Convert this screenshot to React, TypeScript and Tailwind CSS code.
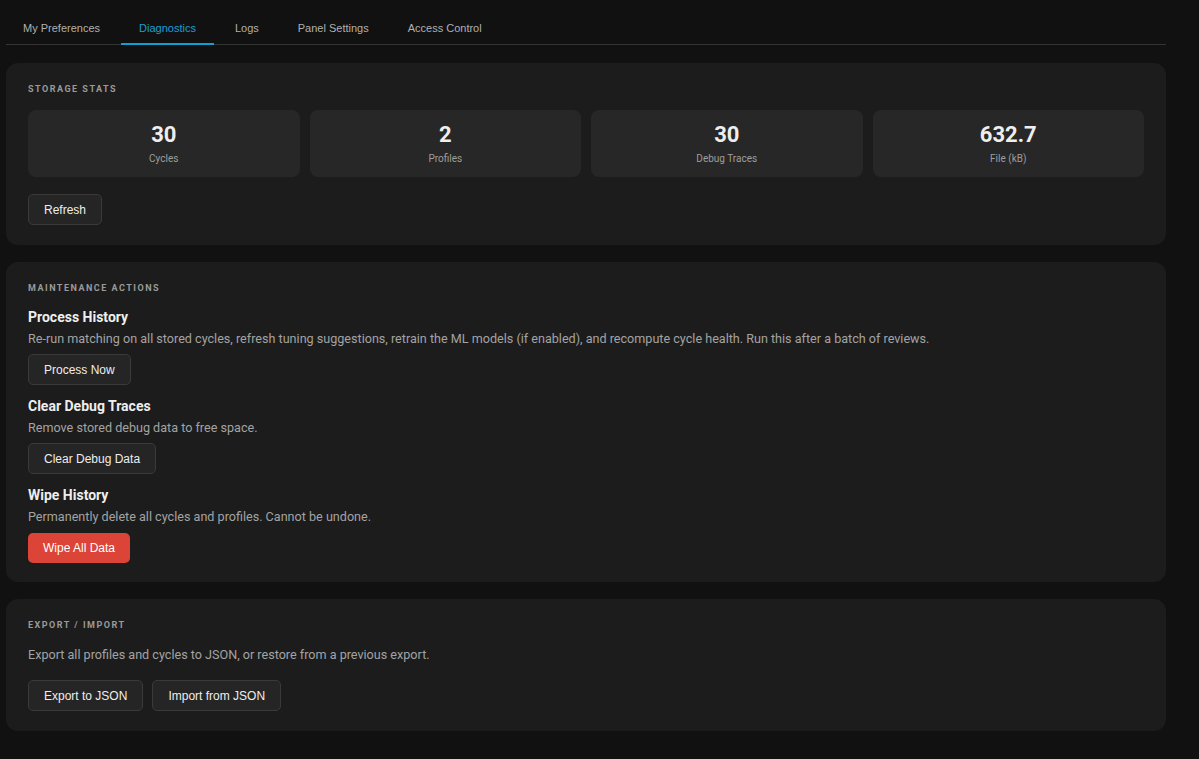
import React from "react";

const tabs = ["My Preferences", "Diagnostics", "Logs", "Panel Settings", "Access Control"];

function SectionTitle({ children }: { children: React.ReactNode }) {
  return (
    <div className="text-[9px] leading-[12px] font-bold tracking-[1.5px] uppercase text-[#9a9a9a] font-['Roboto',sans-serif]">
      {children}
    </div>
  );
}

function Btn({ children, danger }: { children: React.ReactNode; danger?: boolean }) {
  return (
    <button
      className={
        danger
          ? "h-[30px] px-[15px] rounded-[5px] bg-[#db4437] text-white text-[12px] font-['Liberation_Sans',Arial,sans-serif]"
          : "h-[31px] px-[15px] rounded-[5px] bg-[#252525] border border-[#3a3a3a] text-[#eeeeee] text-[12px] font-['Liberation_Sans',Arial,sans-serif]"
      }
    >
      {children}
    </button>
  );
}

function Stat({ value, label }: { value: string; label: string }) {
  return (
    <div className="h-[67px] rounded-lg bg-[#272727] flex flex-col items-center pt-[12px]">
      <div className="text-[22px] leading-[26px] font-bold text-[#eeeeee]">{value}</div>
      <div className="mt-[4px] text-[10px] leading-[14px] text-[#9e9e9e]">{label}</div>
    </div>
  );
}

function Action({
  title,
  desc,
  button,
  danger,
}: {
  title: string;
  desc: string;
  button: string;
  danger?: boolean;
}) {
  return (
    <div className="flex flex-col items-start">
      <div className="text-[14px] leading-[18px] font-bold text-[#eeeeee]">{title}</div>
      <div className="mt-[4px] text-[12.6px] leading-[18px] text-[#a3a3a3]">{desc}</div>
      <div className={danger ? "mt-[7px]" : "mt-[6px]"}>
        <Btn danger={danger}>{button}</Btn>
      </div>
    </div>
  );
}

export default function App() {
  return (
    <div className="min-h-[759px] bg-[#111111] font-['Roboto',sans-serif] pl-[6px] pb-6">
      <div className="w-[1160px]">
        <div className="border-b border-[#333333] pt-[15px]">
          <div className="flex gap-[3px] -ml-px">
            {tabs.map((t) => {
              const active = t === "Diagnostics";
              return (
                <div
                  key={t}
                  className={
                    active
                      ? "px-[18px] pb-[8px] pt-[7px] text-[11px] leading-[13px] font-['Liberation_Sans',Arial,sans-serif] text-[#1a9fd8] border-b-[2px] border-[#0ea0d0] -mb-px"
                      : "px-[18px] pb-[8px] pt-[7px] text-[11px] leading-[13px] font-['Liberation_Sans',Arial,sans-serif] text-[#b0b0b0] border-b-[2px] border-transparent -mb-px"
                  }
                >
                  {t}
                </div>
              );
            })}
          </div>
        </div>

        <div className="mt-[18px] flex flex-col gap-[17px]">
          <section className="rounded-xl bg-[#1c1c1c] px-[22px] pt-[20px] pb-[20px]">
            <SectionTitle>Storage Stats</SectionTitle>
            <div className="mt-[15px] grid grid-cols-4 gap-[10px]">
              <Stat value="30" label="Cycles" />
              <Stat value="2" label="Profiles" />
              <Stat value="30" label="Debug Traces" />
              <Stat value="632.7" label="File (kB)" />
            </div>
            <div className="mt-[17px]">
              <Btn>Refresh</Btn>
            </div>
          </section>

          <section className="rounded-xl bg-[#1c1c1c] px-[22px] pt-[20px] pb-[19px]">
            <SectionTitle>Maintenance Actions</SectionTitle>
            <div className="mt-[14px] flex flex-col gap-[12px]">
              <Action
                title="Process History"
                desc="Re-run matching on all stored cycles, refresh tuning suggestions, retrain the ML models (if enabled), and recompute cycle health. Run this after a batch of reviews."
                button="Process Now"
              />
              <Action
                title="Clear Debug Traces"
                desc="Remove stored debug data to free space."
                button="Clear Debug Data"
              />
              <Action
                title="Wipe History"
                desc="Permanently delete all cycles and profiles. Cannot be undone."
                button="Wipe All Data"
                danger
              />
            </div>
          </section>

          <section className="rounded-xl bg-[#1c1c1c] px-[22px] pt-[20px] pb-[20px]">
            <SectionTitle>Export / Import</SectionTitle>
            <div className="mt-[15px] text-[12.6px] leading-[18px] text-[#a3a3a3]">
              Export all profiles and cycles to JSON, or restore from a previous export.
            </div>
            <div className="mt-[16px] flex gap-[9px]">
              <Btn>Export to JSON</Btn>
              <Btn>Import from JSON</Btn>
            </div>
          </section>
        </div>
      </div>
    </div>
  );
}
